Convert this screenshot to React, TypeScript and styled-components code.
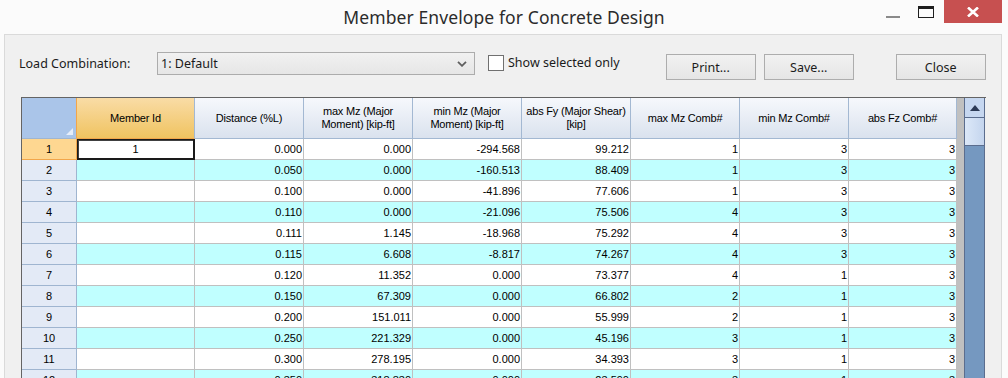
import styled, { createGlobalStyle } from "styled-components";

const GlobalStyle = createGlobalStyle`
    html, body {
        margin : 0;
        padding : 0;
        background : #fbfbfb;
    }
    * {
        box-sizing : border-box;
    }
`;

type Row = {
    no : number;
    distance : string;
    maxMz : string;
    minMz : string;
    absFy : string;
    maxComb : number;
    minComb : number;
    fzComb : number;
};

const rows : Row[] = [
    { no : 1, distance : '0.000', maxMz : '0.000', minMz : '-294.568', absFy : '99.212', maxComb : 1, minComb : 3, fzComb : 3 },
    { no : 2, distance : '0.050', maxMz : '0.000', minMz : '-160.513', absFy : '88.409', maxComb : 1, minComb : 3, fzComb : 3 },
    { no : 3, distance : '0.100', maxMz : '0.000', minMz : '-41.896', absFy : '77.606', maxComb : 1, minComb : 3, fzComb : 3 },
    { no : 4, distance : '0.110', maxMz : '0.000', minMz : '-21.096', absFy : '75.506', maxComb : 4, minComb : 3, fzComb : 3 },
    { no : 5, distance : '0.111', maxMz : '1.145', minMz : '-18.968', absFy : '75.292', maxComb : 4, minComb : 3, fzComb : 3 },
    { no : 6, distance : '0.115', maxMz : '6.608', minMz : '-8.817', absFy : '74.267', maxComb : 4, minComb : 3, fzComb : 3 },
    { no : 7, distance : '0.120', maxMz : '11.352', minMz : '0.000', absFy : '73.377', maxComb : 4, minComb : 1, fzComb : 3 },
    { no : 8, distance : '0.150', maxMz : '67.309', minMz : '0.000', absFy : '66.802', maxComb : 2, minComb : 1, fzComb : 3 },
    { no : 9, distance : '0.200', maxMz : '151.011', minMz : '0.000', absFy : '55.999', maxComb : 2, minComb : 1, fzComb : 3 },
    { no : 10, distance : '0.250', maxMz : '221.329', minMz : '0.000', absFy : '45.196', maxComb : 3, minComb : 1, fzComb : 3 },
    { no : 11, distance : '0.300', maxMz : '278.195', minMz : '0.000', absFy : '34.393', maxComb : 3, minComb : 1, fzComb : 3 },
    { no : 12, distance : '0.350', maxMz : '318.830', minMz : '0.000', absFy : '23.590', maxComb : 3, minComb : 1, fzComb : 3 },
];

const headers = [
    ['Distance (%L)'],
    ['max Mz (Major', 'Moment) [kip-ft]'],
    ['min Mz (Major', 'Moment) [kip-ft]'],
    ['abs Fy (Major Shear)', '[kip]'],
    ['max Mz Comb#'],
    ['min Mz Comb#'],
    ['abs Fz Comb#'],
];

const App = () => {
    return (
        <Window>
            <GlobalStyle />
            <TitleBar>
                <span />
                <Title>Member Envelope for Concrete Design</Title>
                <Controls>
                    <ControlButton $width={28}>
                        <MinGlyph />
                    </ControlButton>
                    <ControlButton $width={37}>
                        <svg width="16" height="12" viewBox="0 0 16 12">
                            <rect x="0.5" y="0.5" width="15" height="11" fill="none" stroke="#1e1e1e" />
                            <rect x="0" y="0" width="16" height="3" fill="#1e1e1e" />
                        </svg>
                    </ControlButton>
                    <CloseButton>
                        <svg width="12" height="10" viewBox="0 0 12 10">
                            <path d="M1 0.5 L11 9.5 M11 0.5 L1 9.5" stroke="#ffffff" strokeWidth="2.6" />
                        </svg>
                    </CloseButton>
                </Controls>
            </TitleBar>

            <Panel>
                <Toolbar>
                    <FieldLabel>Load Combination:</FieldLabel>
                    <Combo>
                        <span>1: Default</span>
                        <svg width="10" height="6" viewBox="0 0 10 6">
                            <path d="M1 0.8 L5 4.8 L9 0.8" fill="none" stroke="#5f5f5f" strokeWidth="1.8" />
                        </svg>
                    </Combo>
                    <CheckWrap>
                        <CheckBox />
                        <span>Show selected only</span>
                    </CheckWrap>
                    <PushButton $ml={46}>Print...</PushButton>
                    <PushButton $ml={8}>Save...</PushButton>
                    <PushButton $ml={42}>Close</PushButton>
                </Toolbar>

                <GridFrame>
                    <Table>
                        <Corner />
                        <HeadCell $active>Member Id</HeadCell>
                        {headers.map((lines, i) => (
                            <HeadCell key={i}>
                                {lines.map((line) => <div key={line}>{line}</div>)}
                            </HeadCell>
                        ))}

                        {rows.map((row) => {
                            const even = row.no % 2 === 0;
                            const values = [row.distance, row.maxMz, row.minMz, row.absFy, row.maxComb, row.minComb, row.fzComb];
                            return [
                                <RowHead key={`h${row.no}`} $active={row.no === 1}>{row.no}</RowHead>,
                                row.no === 1
                                    ? <SelectedCell key={`m${row.no}`}>1</SelectedCell>
                                    : <Cell key={`m${row.no}`} $even={even} />,
                                ...values.map((v, i) => (
                                    <Cell key={`c${row.no}-${i}`} $even={even}>{v}</Cell>
                                )),
                            ];
                        })}
                    </Table>
                    <Gutter />
                    <ScrollBar>
                        <ScrollUp>
                            <svg width="10" height="6" viewBox="0 0 10 6">
                                <path d="M0 6 L5 0 L10 6 Z" fill="#2c3a56" />
                            </svg>
                        </ScrollUp>
                        <Thumb />
                    </ScrollBar>
                </GridFrame>
            </Panel>
        </Window>
    )
}

export default App;

const Window = styled.div`
    width : 1008px;
    height : 378px;
    overflow : hidden;
    background : #fbfbfb;
    display : flex;
    flex-direction : column;
`;

const TitleBar = styled.div`
    display : grid;
    grid-template-columns : 1fr auto 1fr;
    height : 34px;
    flex : none;
`;

const Title = styled.div`
    padding-top : 5px;
    font-family : "Noto Sans", "Open Sans", sans-serif;
    font-size : 17.5px;
    color : #2b2b2b;
    letter-spacing : 0.1px;
`;

const Controls = styled.div`
    display : flex;
    justify-content : flex-end;
    align-items : flex-start;
    padding-right : 6px;
`;

const ControlButton = styled.div<{ $width : number }>`
    width : ${(p) => p.$width}px;
    height : 23px;
    display : flex;
    align-items : center;
    justify-content : center;
    padding-top : 1px;
`;

const MinGlyph = styled.div`
    width : 14px;
    height : 2px;
    margin-top : 10px;
    background : #8a8a8a;
`;

const CloseButton = styled.div`
    width : 58px;
    height : 23px;
    background : #c75050;
    display : flex;
    align-items : center;
    justify-content : center;
`;

const Panel = styled.div`
    flex : 1;
    margin : 0 6px 0 4px;
    border : 1px solid #dadada;
    border-bottom : none;
    background : #f0f0f0;
    padding : 17px 15px 0 14px;
    font-family : "Noto Sans", "Liberation Sans", sans-serif;
    font-size : 12.5px;
    color : #1b1b1b;
`;

const Toolbar = styled.div`
    display : flex;
    align-items : flex-start;
    height : 27px;
`;

const FieldLabel = styled.div`
    width : 138px;
    padding-top : 3px;
`;

const Combo = styled.div`
    width : 318px;
    height : 23px;
    border : 1px solid #acacac;
    background : linear-gradient(#f1f1f1, #e6e6e6);
    display : flex;
    align-items : center;
    justify-content : space-between;
    padding : 0 7px 0 3px;
`;

const CheckWrap = styled.div`
    display : flex;
    align-items : center;
    gap : 4px;
    margin-left : 13px;
    margin-top : 2px;
`;

const CheckBox = styled.div`
    width : 16px;
    height : 16px;
    border : 1px solid #707070;
    background : #ffffff;
`;

const PushButton = styled.div<{ $ml : number }>`
    margin-left : ${(p) => p.$ml}px;
    margin-top : 2px;
    width : 90px;
    height : 26px;
    border : 1px solid #adadad;
    background : linear-gradient(#f1f1f1, #e5e5e5);
    display : flex;
    align-items : center;
    justify-content : center;
`;

const GridFrame = styled.div`
    display : flex;
    margin-top : 18px;
    margin-left : 2px;
    border-top : 1px solid #646464;
    border-left : 1px solid #646464;
    font-family : "Liberation Sans", Arial, sans-serif;
    font-size : 11px;
    color : #000000;
`;

const Table = styled.div`
    display : grid;
    grid-template-columns : 55px 118px repeat(6, 109px) 108px;
    grid-auto-rows : 21px;
    grid-template-rows : 41px;
`;

const Corner = styled.div`
    position : relative;
    background : #aac5e9;
    border-right : 1px solid #f2a64a;
    border-bottom : 1px solid #9fb5d0;
    &::after {
        content : '';
        position : absolute;
        right : 3px;
        bottom : 3px;
        border-style : solid;
        border-width : 0 0 7px 7px;
        border-color : transparent transparent #e6eefa transparent;
    }
`;

const HeadCell = styled.div<{ $active? : boolean }>`
    display : flex;
    flex-direction : column;
    align-items : center;
    justify-content : center;
    text-align : center;
    line-height : 13px;
    letter-spacing : -0.2px;
    background : ${(p) => p.$active
        ? 'linear-gradient(#f9dca6, #f0c360)'
        : 'linear-gradient(#f6f8fc, #dae2ee)'};
    border-right : 1px solid #a3b8d2;
    border-bottom : 1px solid ${(p) => p.$active ? '#f2a64a' : '#a3b8d2'};
`;

const RowHead = styled.div<{ $active? : boolean }>`
    display : flex;
    align-items : center;
    justify-content : center;
    background : ${(p) => p.$active ? '#fed791' : '#e3eaf6'};
    border-right : 1px solid ${(p) => p.$active ? '#f2a64a' : '#9fb5d0'};
    border-bottom : 1px solid ${(p) => p.$active ? '#f2a64a' : '#9fb5d0'};
`;

const Cell = styled.div<{ $even? : boolean }>`
    display : flex;
    align-items : center;
    justify-content : flex-end;
    padding-right : 1px;
    background : ${(p) => p.$even ? '#c0ffff' : '#ffffff'};
    border-right : 1px solid #c0c0c0;
    border-bottom : 1px solid #c0c0c0;
`;

const SelectedCell = styled.div`
    display : flex;
    align-items : center;
    justify-content : center;
    background : #ffffff;
    border : 2px solid #1a1a1a;
    border-top-width : 1px;
    border-left-width : 1px;
    box-shadow : inset 1px 1px 0 #404040;
`;

const Gutter = styled.div`
    width : 7px;
    background : #c0c0c0;
`;

const ScrollBar = styled.div`
    width : 21px;
    align-self : stretch;
    background : #7598c0;
    border : 1px solid #5b6d8e;
    border-top : none;
    display : flex;
    flex-direction : column;
`;

const ScrollUp = styled.div`
    height : 20px;
    background : #c6d7f0;
    border-bottom : 1px solid #5b6d8e;
    display : flex;
    align-items : center;
    justify-content : center;
`;

const Thumb = styled.div`
    height : 28px;
    background : linear-gradient(90deg, #dce8f8, #c4d5ee);
    border-bottom : 1px solid #5b6d8e;
`;
